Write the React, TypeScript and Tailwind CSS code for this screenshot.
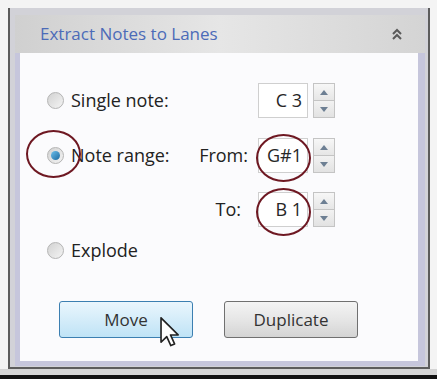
import React from "react";

const font = { fontFamily: '"Open Sans", "Noto Sans", Arial, sans-serif' };

const Radio = ({ checked }: { checked?: boolean }) => (
  <div className="w-[17px] h-[17px] rounded-full border border-[#b4b4b4] bg-gradient-to-br from-[#d2d2d2] to-[#f4f4f4] flex items-center justify-center shrink-0">
    {checked && <div className="w-[9px] h-[9px] rounded-full bg-gradient-to-br from-[#6cc0ec] to-[#1a6aa0]" />}
  </div>
);

const Spin = ({ value, ring }: { value: string; ring?: boolean }) => (
  <div className="flex items-center">
    <div className="relative w-[50px] h-[35px] border border-[#cfcfcf] bg-white flex items-center justify-end pr-[5px] text-[18px] text-[#262626]">
      {value}
      {ring && (
        <div className="absolute left-[-3px] top-[-5px] w-[55px] h-[48px] rounded-[50%] border-[2.5px] border-[#6e1822]" />
      )}
    </div>
    <div className="ml-[5px] w-[22px] h-[35px] flex flex-col border border-[#c4c4c4]">
      <div className="flex-1 flex items-center justify-center bg-gradient-to-b from-[#f7f7f7] to-[#e6e6e6] border-b border-[#c4c4c4]">
        <svg width="8" height="5" viewBox="0 0 8 5"><path d="M0 5 L4 0 L8 5 Z" fill="#6d7f93" /></svg>
      </div>
      <div className="flex-1 flex items-center justify-center bg-gradient-to-b from-[#f2f2f2] to-[#e2e2e2]">
        <svg width="8" height="5" viewBox="0 0 8 5"><path d="M0 0 L4 5 L8 0 Z" fill="#6d7f93" /></svg>
      </div>
    </div>
  </div>
);

export default function App() {
  return (
    <div style={font} className="w-[437px] h-[379px] bg-[#f4f4f4] flex flex-col overflow-hidden">
      <div className="h-[8px] shrink-0" />
      <div className="flex-1 flex pl-[8px] pr-[7px]">
        <div className="flex-1 flex flex-col border-l-2 border-r-2 border-b-2 border-[#5c5c5c] bg-[#d2d2d8] pl-[5px] pr-[3px] pt-[7px]">
          <div className="h-[38px] shrink-0 flex items-center justify-between pl-[25px] pr-[22px] bg-gradient-to-r from-[#d0d0d0] via-[#e6e6e6] to-[#d4d4d4]">
            <span className="text-[17px] text-[#4c6bb8]">Extract Notes to Lanes</span>
            <svg width="12" height="14" viewBox="0 0 12 14">
              <path d="M2 7 L6 3 L10 7 M2 12 L6 8 L10 12" fill="none" stroke="#5a5a5a" strokeWidth="2" />
            </svg>
          </div>
          <div className="h-[313px] bg-[#c6c6dc] pl-[5px] pr-[7px] pb-[5px]">
            <div className="h-full bg-[#fbfbfd] flex flex-col pt-[30px] pl-[27px] text-[18px] text-[#222]">
              <div className="flex items-center h-[35px]">
                <div className="w-[211px] flex items-center">
                  <Radio />
                  <span className="ml-[7px]">Single note:</span>
                </div>
                <Spin value="C 3" />
              </div>
              <div className="flex items-center h-[35px] mt-[20px]">
                <div className="w-[146px] flex items-center">
                  <div className="relative">
                    <Radio checked />
                    <div className="absolute left-[-21px] top-[-17px] w-[55px] h-[48px] rounded-[50%] border-[2.5px] border-[#6e1822]" />
                  </div>
                  <span className="ml-[7px]">Note range:</span>
                </div>
                <div className="w-[55px] text-right">From:</div>
                <div className="ml-[10px]">
                  <Spin value="G#1" ring />
                </div>
              </div>
              <div className="flex items-center h-[35px] mt-[19px]">
                <div className="w-[146px]" />
                <div className="w-[48px] text-right">To:</div>
                <div className="ml-[17px]">
                  <Spin value="B 1" ring />
                </div>
              </div>
              <div className="flex items-center h-[18px] mt-[14px]">
                <Radio />
                <span className="ml-[7px]">Explode</span>
              </div>
              <div className="flex mt-[42px] pl-[12px] gap-[31px] text-[17px]">
                <div className="relative w-[134px] h-[37px] rounded-[3px] border border-[#3c7fb1] bg-gradient-to-b from-[#eaf6fd] to-[#bfe3f6] flex items-center justify-center text-[#333]">
                  Move
                  <svg className="absolute left-[100px] top-[15px]" width="20" height="31" viewBox="0 0 12 19">
                    <path d="M0.5 0.5 L0.5 15.5 L4 12 L6.5 17.5 L8.8 16.5 L6.3 11 L11 11 Z" fill="#fff" stroke="#222" strokeWidth="1" strokeLinejoin="round" />
                  </svg>
                </div>
                <div className="w-[134px] h-[37px] rounded-[3px] border border-[#707070] bg-gradient-to-b from-[#f4f4f4] via-[#e6e6e6] to-[#d4d4d4] flex items-center justify-center text-[#333]">
                  Duplicate
                </div>
              </div>
            </div>
          </div>
        </div>
      </div>
      <div className="h-[6px] bg-[#d4d4d4] shrink-0" />
      <div className="h-[4px] bg-[#111] shrink-0" />
    </div>
  );
}
